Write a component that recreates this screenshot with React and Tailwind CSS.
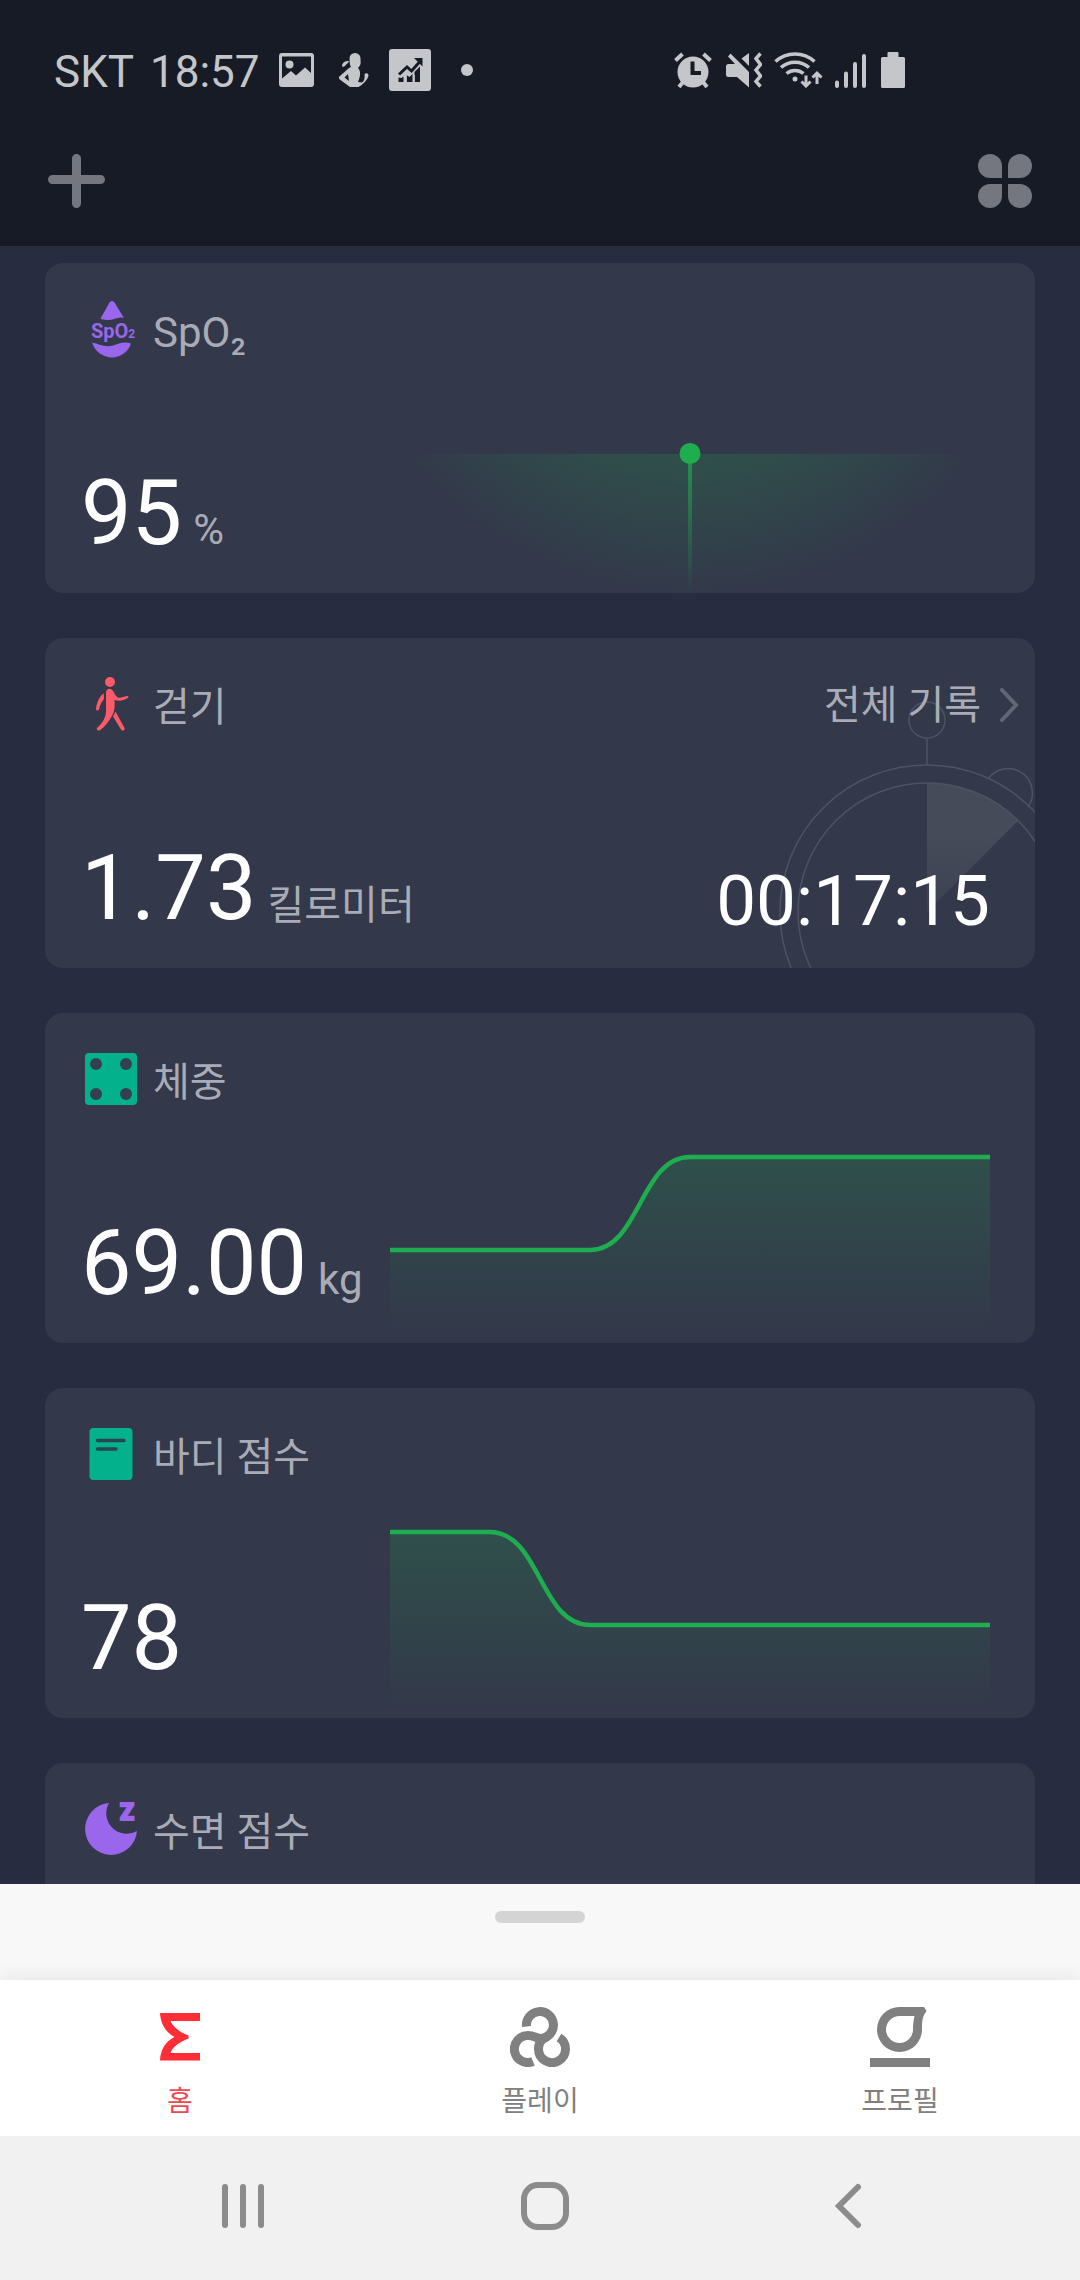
// src/App.jsx
import clsx from 'clsx';

const GREEN = '#1fae4f';

/* ---------- status bar ---------- */

function StatusBar() {
  return (
    <div className="flex items-center justify-between pt-12 pl-[54px] pr-[175px] text-[#c5c6ca]">
      <div className="flex h-11 items-center">
        <div className="flex gap-4 pt-1 text-[44px] leading-none">
          <span>SKT</span>
          <span>18:57</span>
        </div>
        <svg className="ml-[19px]" width="35" height="34" viewBox="0 0 35 34" fill="currentColor">
          <path
            fillRule="evenodd"
            d="M3 0h29a3 3 0 0 1 3 3v28a3 3 0 0 1-3 3H3a3 3 0 0 1-3-3V3a3 3 0 0 1 3-3Zm0 3.500v22l9-7.500 5 4.500 9-8 6 5.500V3.500Z"
          />
          <circle cx="10.500" cy="11.500" r="4" />
        </svg>
        <svg className="ml-[25px]" width="30" height="34" viewBox="0 0 30 34" fill="currentColor">
          <path d="M10.500 5.500a5.500 5.500 0 0 1 11 0c0 3 .5 5-.5 7l-2 2.500c3 3 2.500 8 0 14l4 .5c2-1.500 3-4 2.500-8 1-2 4-1.500 4 1-.5 4-6 9.500-10 11.500H11L1.500 27c-2-1-2-3-.5-4l9-8 2-1c-1-1.500-1.500-4-1.500-8.500Z" />
          <path d="M3 12c1-3 4-4.500 7-4l-1 2c-2 1-3 4-5.500 4Z" />
          <path d="m9 21-3.500 3.500L10 28Z" fill="#171b26" />
        </svg>
        <svg className="ml-5" width="42" height="42" viewBox="0 0 42 42">
          <rect width="42" height="42" rx="3" fill="currentColor" />
          <g fill="#171b26">
            <path d="M9.500 28.500 12.500 29l2-1.500V33h-5ZM17.500 26l3 2 3-3v8h-6ZM26.500 22.500l1-1.500V33h-1Z" />
            <path d="M25.500 23 31 17.500V33h-5.500Z" />
          </g>
          <path d="m10 25.500 8-7.500 4.500 4L31 12.500" fill="none" stroke="#171b26" strokeWidth="3" />
          <path d="M25 9h8.500v8.500Z" fill="#171b26" />
          <path d="M17 26v7M25 26v7" stroke="currentColor" strokeWidth="1.500" />
        </svg>
        <span className="ml-[30px] size-3 rounded-full bg-current" />
      </div>

      <div className="flex h-11 items-center">
        <svg width="38" height="36" viewBox="0 0 38 36">
          <circle cx="19" cy="20" r="15.500" fill="currentColor" />
          <g stroke="currentColor" strokeWidth="4">
            <path d="m1.500 8.500 7-6.500M36.500 8.500l-7-6.500M9 30l-4 5M29 30l4 5" />
          </g>
          <path d="M18.500 9.500v11.500h8.500" fill="none" stroke="#171b26" strokeWidth="4" />
        </svg>
        <svg className="ml-[14px]" width="36" height="36" viewBox="0 0 36 36">
          <path
            d="M2.500 12H9L2 4.500 4.500 1.500 23 20v15.500L11 25H2.500a2.500 2.500 0 0 1-2.500-2.500v-8A2.500 2.500 0 0 1 2.500 12Z"
            fill="currentColor"
          />
          <path d="M23 1v13l-7.500-7.500Z" fill="currentColor" />
          <path d="m34.500 1.500-4.500 5 4.500 6-4.500 5.500 4.500 6-4.500 5.500 4.500 5" fill="none" stroke="currentColor" strokeWidth="3.500" />
        </svg>
        <svg className="ml-3" width="50" height="36" viewBox="0 0 50 36" fill="none" stroke="currentColor">
          <g strokeWidth="3.500">
            <path d="M1.500 9.500a29 29 0 0 1 39 0" />
            <path d="M7 15.500a21 21 0 0 1 28 0" />
            <path d="M12.500 21.500a13.500 13.500 0 0 1 17 0" />
          </g>
          <circle cx="21" cy="27" r="2.500" fill="currentColor" stroke="none" />
          <path d="M32 23.500v10M27.500 29.500l4.500 4.500 4.500-4.500M43 32V22M38.500 25.500l4.500-4.500 4.500 4.500" strokeWidth="3" />
        </svg>
        <svg className="ml-[11px]" width="32" height="36" viewBox="0 0 32 36" stroke="currentColor" strokeWidth="4" strokeLinecap="round">
          <path d="M2 30.500V34M11 21.500V34M20 12v22M29 4v30" />
        </svg>
        <svg className="ml-[14px]" width="24" height="36" viewBox="0 0 24 36" fill="currentColor">
          <path d="M7.500 0h9a1 1 0 0 1 1 1v4h5A1.500 1.500 0 0 1 24 6.500v28a1.500 1.500 0 0 1-1.500 1.500h-21A1.500 1.500 0 0 1 0 34.500v-28A1.500 1.500 0 0 1 1.500 5h5V1a1 1 0 0 1 1-1Z" />
        </svg>
      </div>
    </div>
  );
}

function TopBar() {
  return (
    <div className="flex items-center justify-between px-12 pt-[62px] pb-[38px] text-[#74777f]">
      <button type="button" aria-label="추가">
        <svg width="57" height="54" viewBox="0 0 57 54" stroke="currentColor" strokeWidth="9" strokeLinecap="round">
          <path d="M28.500 4.500v45M4.500 25.500h48" />
        </svg>
      </button>
      <button type="button" aria-label="메뉴" className="grid grid-cols-2 gap-[6px]">
        <span className="size-6 rounded-full rounded-br-[3px] bg-current" />
        <span className="size-6 rounded-full rounded-bl-[3px] bg-current" />
        <span className="size-6 rounded-full rounded-tr-[3px] bg-current" />
        <span className="size-6 rounded-full rounded-tl-[3px] bg-current" />
      </button>
    </div>
  );
}

/* ---------- card icons ---------- */

function Spo2Icon() {
  return (
    <svg width="60" height="60" viewBox="0 0 60 60" fill="#9966ec">
      <path d="M28.500 3.500Q31 .5 33.500 3.500L43 19C37 17 33 21.500 26 21 23 20.800 21 20.500 19.500 19.500Z" />
      <path d="M11 43.500C18 45 24 49 32 46.500 38 44.500 43 42 50 44.500 48 52 40 58.500 31 58.500S13.500 52 11 43.500Z" />
      <text x="10" y="39" fontSize="20" fontWeight="700" fontFamily="Roboto, sans-serif">
        SpO
        <tspan fontSize="12">2</tspan>
      </text>
    </svg>
  );
}

function WalkIcon() {
  return (
    <svg width="60" height="60" viewBox="0 0 60 60" fill="#fb5a68">
      <circle cx="29" cy="8" r="5" />
      <path d="M25 19c0-5.500 6-5.500 8-.5 2 4 3.500 5.500 6 5.300l7-1.700c2-.3 2 1.500.3 2.200C43 26.500 38 27.500 33.500 26c.5 6 .3 11-2.500 16-3 5.500-7.500 11-12 14.300-2 1-4-.7-3-2.300 5-4.500 9-10 9-17Z" />
      <path d="M22.700 19.300c-4 3-7 9-7.700 15.500 0 2.200 2.300 2.200 3 .7 1-5 3-8 5-10.500Z" />
      <path d="m34.500 37.500 9 16.500c1 2-1.500 3.500-3.200 2L32 42.500Z" />
    </svg>
  );
}

function ScaleIcon() {
  return (
    <svg width="60" height="60" viewBox="0 0 60 60" fill="#33404f">
      <rect x="4" y="4" width="52" height="52" rx="4" fill="#03b28c" />
      <circle cx="15" cy="15" r="6" />
      <circle cx="45" cy="15" r="6" />
      <circle cx="15" cy="45" r="6" />
      <circle cx="45" cy="45" r="6" />
    </svg>
  );
}

function ReportIcon() {
  return (
    <svg width="60" height="60" viewBox="0 0 60 60">
      <rect x="8.500" y="4" width="43" height="52" rx="4" fill="#03b28c" />
      <path d="M16.500 16.500H43M16.500 25H35" stroke="#28464f" strokeWidth="3.500" strokeLinecap="round" />
    </svg>
  );
}

function SleepIcon() {
  return (
    <svg width="60" height="60" viewBox="0 0 60 60" fill="#9966ec">
      <path d="M28 4A26 26 0 1 0 56 32 20.500 20.500 0 0 1 28 4Z" />
      <text x="39" y="21" fontSize="23" fontWeight="900" fontFamily="Roboto, sans-serif" stroke="#9966ec" strokeWidth="2">
        Z
      </text>
    </svg>
  );
}

/* ---------- charts ---------- */

function PointChart() {
  return (
    <svg className="h-[330px] w-full" viewBox="0 0 600 330" preserveAspectRatio="none">
      <defs>
        <radialGradient id="pointGlow" gradientUnits="userSpaceOnUse" cx="300" cy="-28" r="364">
          <stop offset="0.600" stopColor={GREEN} stopOpacity="0.200" />
          <stop offset="1" stopColor={GREEN} stopOpacity="0" />
        </radialGradient>
        <linearGradient id="pointStem" x1="0" y1="0" x2="0" y2="1">
          <stop offset="0" stopColor={GREEN} stopOpacity="0.700" />
          <stop offset="1" stopColor={GREEN} stopOpacity="0" />
        </linearGradient>
      </defs>
      <rect x="0" y="191" width="600" height="139" fill="url(#pointGlow)" />
      <rect x="298" y="191" width="4" height="139" fill="url(#pointStem)" />
      <circle cx="300" cy="190.500" r="10.500" fill={GREEN} />
    </svg>
  );
}

function TrendChart({ id, line }) {
  return (
    <svg className="h-[330px] w-full" viewBox="0 0 600 330" preserveAspectRatio="none">
      <defs>
        <linearGradient id={id} gradientUnits="userSpaceOnUse" x1="0" y1="144" x2="0" y2="326">
          <stop offset="0" stopColor={GREEN} stopOpacity="0.200" />
          <stop offset="1" stopColor={GREEN} stopOpacity="0" />
        </linearGradient>
      </defs>
      <path d={`${line}V330H0Z`} fill={`url(#${id})`} />
      <path d={line} fill="none" stroke={GREEN} strokeWidth="4.500" />
    </svg>
  );
}

function Stopwatch() {
  return (
    <svg className="absolute top-0 right-0" width="270" height="330" viewBox="0 0 270 330" fill="none">
      <defs>
        <linearGradient id="wedge" x1="0" y1="0" x2="0" y2="1">
          <stop offset="0.400" stopColor="#464b5a" />
          <stop offset="1" stopColor="#464b5a" stopOpacity="0.500" />
        </linearGradient>
      </defs>
      <path d="M162 274V145a129 129 0 0 1 91 38Z" fill="url(#wedge)" />
      <g stroke="#4e5363" strokeWidth="1.500">
        <circle cx="162" cy="274" r="147" />
        <circle cx="162" cy="274" r="129" />
        <circle cx="162" cy="82" r="18" />
        <path d="M162 100v27M223 141a24 24 0 1 1 40 28" />
      </g>
    </svg>
  );
}

/* ---------- cards ---------- */

const CARDS = [
  { title: 'SpO₂', icon: Spo2Icon, value: '95', unit: '%', latin: true, chart: <PointChart /> },
  { title: '걷기', icon: WalkIcon, value: '1.73', unit: '킬로미터', time: '00:17:15', link: '전체 기록' },
  {
    title: '체중',
    icon: ScaleIcon,
    value: '69.00',
    unit: 'kg',
    chart: <TrendChart id="weight" line="M0 237H200C250 237 250 144 300 144H600" />,
  },
  {
    title: '바디 점수',
    icon: ReportIcon,
    value: '78',
    chart: <TrendChart id="score" line="M0 144H100C150 144 150 237 200 237H600" />,
  },
  { title: '수면 점수', icon: SleepIcon },
];

// Hangul glyphs run larger than Roboto at the same size
const labelSize = (text) => (/[가-힣]/.test(text) ? 'text-[40px]' : 'text-[42px]');

function HealthCard({ title, icon: Icon, value, unit, chart, time, link }) {
  return (
    <section className="relative flex min-h-[330px] shrink-0 overflow-hidden rounded-[18px] bg-[#33384a]">
      {time && <Stopwatch />}

      <div className="relative flex w-[345px] shrink-0 flex-col justify-between pt-9 pb-[34px] pl-9 whitespace-nowrap">
        <div className="flex items-center gap-3">
          <Icon />
          <h2 className={clsx('pt-[7px] leading-none text-[#a9acb6]', labelSize(title))}>{title}</h2>
        </div>
        {value && (
          <p className="flex items-baseline gap-[11px]">
            <span className="text-[90px] leading-none text-white">{value}</span>
            {unit && <span className={clsx('leading-none text-[#a9acb6]', labelSize(unit))}>{unit}</span>}
          </p>
        )}
      </div>

      {chart && <div className="min-w-0 flex-1 pr-[45px]">{chart}</div>}

      {time && (
        <div className="relative flex flex-1 flex-col items-end justify-between pt-12 pb-8">
          <a href="#records" className="flex items-center gap-[18px] pr-4 text-[40px] leading-none text-[#a9acb6]">
            {link}
            <svg width="20" height="36" viewBox="0 0 20 36" fill="none" stroke="#636775" strokeWidth="4" strokeLinecap="round">
              <path d="m3 2 14 15L3 32" />
            </svg>
          </a>
          <p className="pr-[45px] text-[71px] leading-none text-white">{time}</p>
        </div>
      )}
    </section>
  );
}

/* ---------- bottom navigation ---------- */

function HomeIcon() {
  return (
    <svg width="60" height="60" viewBox="0 0 60 60" fill="#fe2d36">
      <path d="M10 6h40v8H20.500C22 19 30 25.500 38.500 28.500v3C30 34.500 22 40.500 20.500 46H50v7.500H10C10.500 42 16 34 24.500 30 16 25.500 10.500 17 10 6Z" />
    </svg>
  );
}

function PlayIcon() {
  return (
    <svg width="60" height="60" viewBox="0 0 60 60" fill="none" stroke="currentColor" strokeWidth="9">
      <path d="M16.500 19.500A13.500 13.500 0 1 1 31 31.500C27 31.500 24 28.500 18 28.500A13.500 13.500 0 1 0 23 54.500" />
      <path d="M49 30.500A13.500 13.500 0 1 1 28.500 42C28.500 34 33 32 37 29.500" />
    </svg>
  );
}

function ProfileIcon() {
  return (
    <svg width="60" height="60" viewBox="0 0 60 60" fill="currentColor">
      <path
        fillRule="evenodd"
        d="M29.500 0H54l2.500 4C52.500 9 52 14 52 22.500A22.500 22.500 0 1 1 29.500 0Zm0 9A13.500 13.500 0 1 0 43 22.500C43 18 43.500 13 44.500 9Z"
      />
      <path d="M0 51h60v9H0Z" />
    </svg>
  );
}

const TABS = [
  { label: '홈', icon: HomeIcon, active: true },
  { label: '플레이', icon: PlayIcon },
  { label: '프로필', icon: ProfileIcon },
];

function TabBar() {
  return (
    <nav className="relative grid grid-cols-3 bg-white pt-[27px] pb-[18px] shadow-[0_-2px_20px_rgba(0,0,0,0.08)]">
      {TABS.map(({ label, icon: Icon, active }) => (
        <a
          key={label}
          href={`#${label}`}
          className={clsx('flex flex-col items-center gap-[19px]', active ? 'text-[#ee4a50]' : 'text-[#808080]')}
        >
          <Icon />
          <span className="text-[28px] leading-8">{label}</span>
        </a>
      ))}
    </nav>
  );
}

function SystemBar() {
  return (
    <div className="relative grid h-36 grid-cols-3 items-center bg-[#f1f1f1] pr-[81px] pb-1 pl-[92px] text-[#8c8c8c]">
      <button type="button" aria-label="최근 앱" className="flex justify-center gap-3">
        <span className="h-11 w-[6px] rounded-full bg-current" />
        <span className="h-11 w-[6px] rounded-full bg-current" />
        <span className="h-11 w-[6px] rounded-full bg-current" />
      </button>
      <button type="button" aria-label="홈 화면" className="flex justify-center">
        <span className="size-12 rounded-[17px] border-6 border-current" />
      </button>
      <button type="button" aria-label="뒤로" className="flex justify-center">
        <svg width="28" height="46" viewBox="0 0 28 46" fill="none" stroke="currentColor" strokeWidth="6" strokeLinecap="round">
          <path d="M24 4 5 23l19 19" />
        </svg>
      </button>
    </div>
  );
}

export default function App() {
  return (
    <div className="flex h-screen flex-col bg-[#272c40] font-[Roboto,'Noto_Sans_CJK_KR',sans-serif]">
      <header className="shrink-0 bg-[#171b26]">
        <StatusBar />
        <TopBar />
      </header>

      <main className="flex min-h-0 flex-1 flex-col gap-[45px] overflow-y-auto px-[45px] pt-[17px] [scrollbar-width:none]">
        {CARDS.map((card) => (
          <HealthCard key={card.title} {...card} />
        ))}
      </main>

      <footer className="shrink-0 bg-[#f8f8f8]">
        <div className="flex justify-center pt-[27px] pb-[57px]">
          <span className="h-3 w-[90px] rounded-full bg-[#d4d4d4]" />
        </div>
        <TabBar />
        <SystemBar />
      </footer>
    </div>
  );
}
